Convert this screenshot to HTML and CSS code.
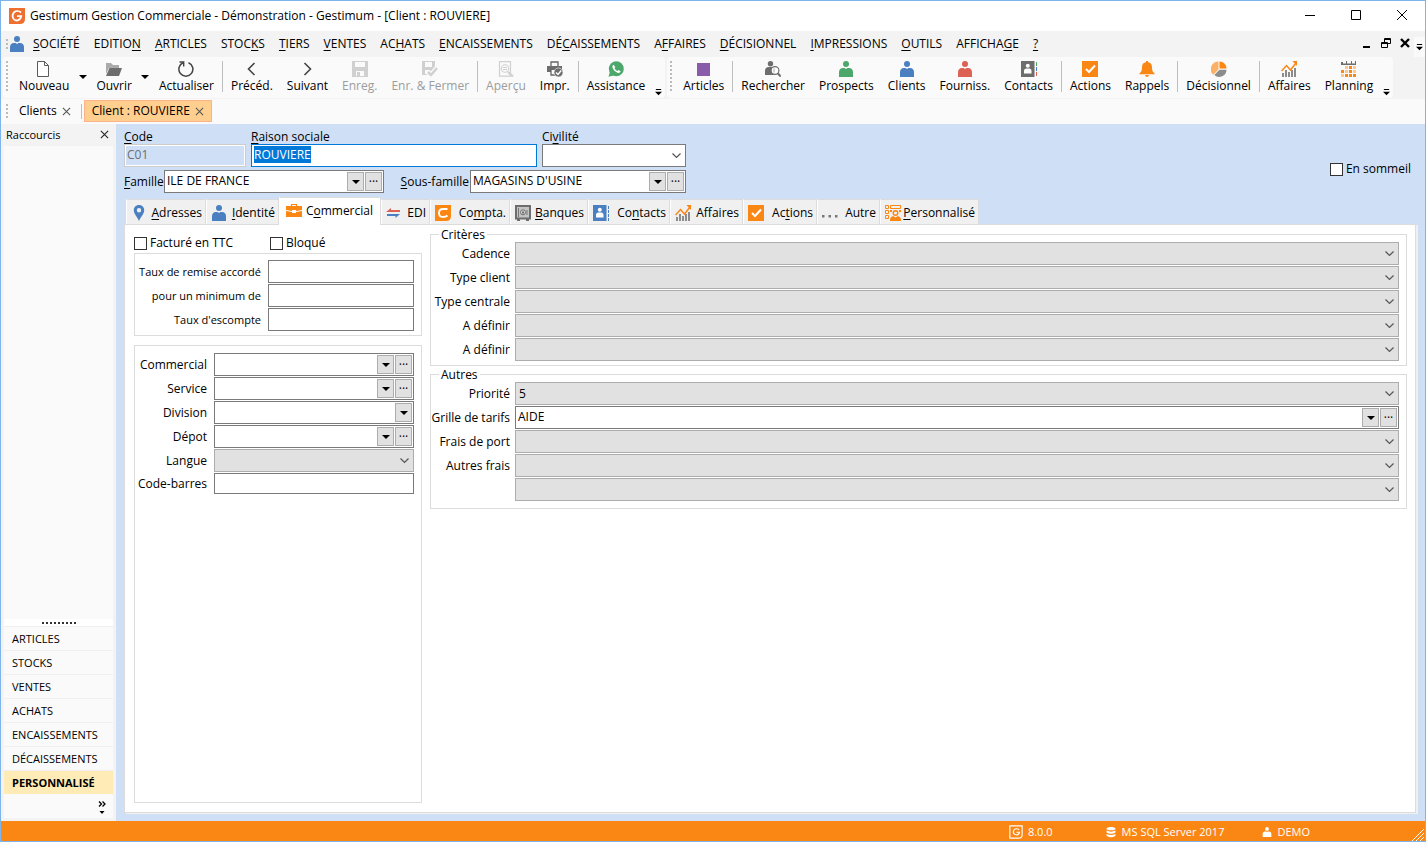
FILE: index.html
```
<!DOCTYPE html>
<html lang="fr">
<head>
    <meta charset="UTF-8">
    <meta name="viewport" content="width=device-width, initial-scale=1.0">
    <title>Gestimum Gestion Commerciale</title>
    <link rel="stylesheet" href="styles.css">
</head>
<body>
    <!-- Icons -->
    <svg class="sprite" aria-hidden="true">
        <symbol id="logo" viewBox="0 0 16 16"><path fill="#ee7030" d="M0 0h16v11q0 5-5 5H0z"/><path fill="none" stroke="#fff" stroke-width="1.8" d="M12 4.500C10 2.600 7 2.600 5 4.300 3 6.500 3.200 9.800 5 11.400c2.400 2 6.500 1.200 7.200-3.200H8"/></symbol>
        <symbol id="person" viewBox="0 0 16 16"><circle cx="8" cy="3" r="3" fill="currentColor"/><path fill="currentColor" d="M1 16v-4.500Q1 7 5 7h1.500L8 8l1.500-1H11q4 0 4 4.500V16z"/></symbol>
        <symbol id="file" viewBox="0 0 16 16"><path fill="#fff" stroke="#5a5a5a" d="M1.500.5h7l4 4v11h-11z"/><path fill="none" stroke="#5a5a5a" d="M8.500.5v4h4"/></symbol>
        <symbol id="folder" viewBox="0 0 16 16"><path fill="#aaa" d="M0 2h5l2 2h6v3H3L0 13z"/><path fill="#6d6d6d" d="M3.500 7H16l-3 8H0z"/></symbol>
        <symbol id="refresh" viewBox="0 0 16 16"><path fill="none" stroke="#444" stroke-width="1.500" d="M10.500 1.700a7 7 0 1 1-5.500.1"/><path fill="none" stroke="#444" stroke-width="1.400" d="M1.500 1h4.200v4.500"/></symbol>
        <symbol id="prev" viewBox="0 0 16 16"><path fill="none" stroke="#444" stroke-width="1.600" d="M10.500 2 4.500 8l6 6"/></symbol>
        <symbol id="next" viewBox="0 0 16 16"><path fill="none" stroke="#444" stroke-width="1.600" d="m5.500 2 6 6-6 6"/></symbol>
        <symbol id="save" viewBox="0 0 16 16"><path fill="#d0d0d0" d="M0 0h16v16H0z"/><path fill="#fafafa" d="M3 1h10v5H3zM4 10h8v5H4z"/><path fill="#d0d0d0" d="M5 11h3v4H5z"/></symbol>
        <symbol id="savecheck" viewBox="0 0 16 16"><path fill="#d0d0d0" d="M0 0h13v14H0z"/><path fill="#fafafa" d="M3 1h7v5H3zM3 9h5v4H3z"/><path fill="none" stroke="#fafafa" stroke-width="5" d="m6 11 3 3 6-7"/><path fill="none" stroke="#d0d0d0" stroke-width="2.500" d="m6 11 3 3 6-7"/></symbol>
        <symbol id="preview" viewBox="0 0 16 16"><path fill="none" stroke="#d0d0d0" stroke-width="1.200" d="M1.500.7h11v14.500h-11z"/><circle cx="7" cy="7.500" r="3.700" fill="#fafafa" stroke="#d0d0d0" stroke-width="1.100"/><path stroke="#d0d0d0" stroke-width="2.200" d="m10 11 5 4.500"/><path stroke="#d0d0d0" d="M5 6.500h4M5 8.500h4"/></symbol>
        <symbol id="printer" viewBox="0 0 16 16"><path fill="none" stroke="#666" stroke-width="1.300" d="M4 5V1h7v4"/><path fill="#6d6d6d" d="M0 5h15v6h-3V9H4v2H0z"/><path fill="none" stroke="#666" stroke-width="1.300" d="M4 9v5h4"/><circle cx="11.500" cy="11.500" r="4.500" fill="#6d6d6d" stroke="#fafafa" stroke-width=".6"/><path fill="none" stroke="#fff" stroke-width="1.400" d="m9 11.500 2 2 3.200-4"/></symbol>
        <symbol id="phone" viewBox="0 0 16 16"><circle cx="8.300" cy="7.700" r="7.500" fill="#4ca76b"/><path fill="#4ca76b" d="m.5 15.800 1.500-5 3.500 3.700z"/><path fill="#fff" d="M5.500 3.700c-1 .6-1.400 1.700-.9 3 1 2.600 2.800 4.300 5.300 5.200 1.300.4 2.400-.3 2.700-1.600l-2-1.300-1.100 1c-1.500-.6-2.400-1.500-3-2.900l.8-1z"/></symbol>
        <symbol id="square" viewBox="0 0 16 16"><path fill="#8a5aab" d="M1 2h13v13H1z"/></symbol>
        <symbol id="search" viewBox="0 0 16 16"><circle cx="5.500" cy="2.700" r="2.700" fill="#6d6d6d"/><path fill="#6d6d6d" d="M0 14v-4q0-4 4-4h5v8z"/><circle cx="10" cy="9.500" r="3.900" fill="#fff" stroke="#6d6d6d" stroke-width="1.200"/><path stroke="#6d6d6d" stroke-width="2" d="m12.700 12.300 3 3.200"/><path stroke="#aaa" d="M9 7.500v4"/></symbol>
        <symbol id="book" viewBox="0 0 16 16"><path fill="currentColor" d="M0 0h13.500v16H0z"/><circle cx="6.800" cy="4.800" r="2" fill="#fff"/><path fill="#fff" d="M3 12.500V10q0-2.500 2.500-2.500H8q2.500 0 2.500 2.500v2.500z"/></symbol>
        <symbol id="bookcolor" viewBox="0 0 16 16"><use href="#book"/><path fill="#4ca76b" d="M15 1h1v4h-1z"/><path fill="#4a7fc1" d="M15 6h1v4h-1z"/><path fill="#dc6254" d="M15 11h1v4h-1z"/></symbol>
        <symbol id="bookblue" viewBox="0 0 16 16"><use href="#book"/><path fill="none" stroke="#4a7fc1" stroke-dasharray="3 1" d="M15.500 1v15"/></symbol>
        <symbol id="check" viewBox="0 0 16 16"><path fill="#fa8714" d="M0 0h16v16H0z"/><path fill="none" stroke="#fff" stroke-width="2" d="m4 8 3 3 6-6.500"/></symbol>
        <symbol id="bell" viewBox="0 0 16 16"><path fill="#fa8714" d="M7 0h2v1.300q4 .7 4 5c0 3 .6 5 2.500 6v1H.5v-1c1.900-1 2.500-3 2.500-6q0-4.300 4-5zM6 14h4q-.5 2-2 2t-2-2z"/></symbol>
        <symbol id="pie" viewBox="0 0 16 16"><path fill="#fbb065" d="M7.500 8.500V.5a7.700 7.700 0 0 0-5.300 13.300z"/><path fill="#fa8714" d="M8.500 7.500V.5a7 7 0 0 1 7 7z"/><path fill="#8c8c8c" d="M8.500 8.700h7A7.300 7.300 0 0 1 3.300 14z"/></symbol>
        <symbol id="chart" viewBox="0 0 16 16"><path fill="#8c8c8c" d="M1 12h2v4H1zM4 9h2v7H4zM7 11h2v5H7zM10 9h2v7h-2zM13 7h2v9h-2z"/><path fill="none" stroke="#fa8714" stroke-width="1.500" d="m.5 10 5-5.500 4 4.500 5.500-7"/><path fill="#fa8714" d="M11.500 0H16v5z"/></symbol>
        <symbol id="calendar" viewBox="0 0 16 16"><path fill="#6d6d6d" d="M0 1h2v1.500h3V0h1v2.500h4V0h1v2.500h3V0h1v4H0z"/><path fill="#fbc894" d="M4 5h3v3H4zM12 5h3v3h-3zM4 9h3v3H4zM12 9h3v3h-3zM0 13h3v3H0z"/><path fill="#fa8714" d="M8 5h3v3H8zM0 9h3v3H0zM8 9h3v3H8zM4 13h3v3H4zM8 13h3v3H8zM12 13h3v3h-3z"/></symbol>
        <symbol id="pin" viewBox="0 0 16 16"><path fill="#4a7fc1" fill-rule="evenodd" d="M8 0c3 0 5.200 2.200 5.200 5.200C13.200 9 10 11 8 16 6 11 2.800 9 2.800 5.200 2.800 2.200 5 0 8 0m0 3a2.200 2.200 0 1 0 0 4.400A2.200 2.200 0 0 0 8 3"/></symbol>
        <symbol id="case" viewBox="0 0 16 16"><path fill="none" stroke="#fa8714" stroke-width="1.200" d="M5.500 3.500v-2h5v2"/><path fill="#fa8714" d="M0 3h16v4l-6 1V7H6v1L0 7zM0 8l6 1v1h4V9l6-1v6H0z"/></symbol>
        <symbol id="arrows" viewBox="0 0 16 16"><path fill="#dc6254" d="m0 7 5-4v2h9v2z"/><path fill="#4a7fc1" d="M1 9h13l-4.500 4v-2H1z"/></symbol>
        <symbol id="compta" viewBox="0 0 16 16"><path fill="#fa8714" d="M0 0h16v11q0 5-5 5H0z"/><path fill="none" stroke="#fff" stroke-width="1.800" d="M12.500 4H8Q4 4 4 8t4 4q3 0 4.500-1.500"/></symbol>
        <symbol id="safe" viewBox="0 0 16 16"><path fill="#c4c4c4" stroke="#6d6d6d" stroke-width="2" d="M1 1h14v12.500H1z"/><path fill="none" stroke="#777" d="M3.500 3v9M12 5v5"/><circle cx="8" cy="7.300" r="2.500" fill="#ddd" stroke="#6d6d6d"/><path fill="#6d6d6d" d="M2 14h3v2H2zM11 14h3v2h-3zM7 6.500h2v2H7z"/></symbol>
        <symbol id="dots" viewBox="0 0 16 16"><path fill="#777" d="M0 10h2.500v2.500H0zM6.500 10H9v2.500H6.500zM13 10h2.500v2.500H13z"/></symbol>
        <symbol id="custom" viewBox="0 0 16 16"><path fill="none" stroke="#fa8714" d="M.5.500h3v3h-3zM.5 5.500h3v3h-3zM.5 10.500h3v3h-3zM5.500.500h10v3h-10z"/><path fill="#fa8714" d="M5 5h2v2H5zM14 5h2v2h-2zM5 16v-1q0-3 3-4l2.500 1.500L13 11q3 1 3 4v1z"/><circle cx="10.500" cy="8" r="2.300" fill="none" stroke="#fa8714" stroke-width="1.400"/></symbol>
        <symbol id="logoline" viewBox="0 0 16 16"><path fill="none" stroke="#fff" stroke-width="1.300" d="M1 1h14v10q0 4-4 4H1z"/><path fill="none" stroke="#fff" stroke-width="1.300" d="M11.500 5.500c-2-2-6-1.700-6.500 2-.4 4 6 5.500 7 .8H8.500"/></symbol>
        <symbol id="database" viewBox="0 0 16 16"><path fill="#fff" d="M2 3.500c0-3 12-3 12 0s-12 3-12 0M2 6q6 3 12 0v2.500q-6 3.500-12 0zM2 10.500q6 3 12 0V13q-6 4-12 0z"/></symbol>
        <symbol id="caret" viewBox="0 0 8 4"><path fill="currentColor" d="M0 0h8L4 4z"/></symbol>
        <symbol id="more" viewBox="0 0 8 8"><path fill="#000" d="M1 0h6v1H1zM0 3h8L4 7z"/></symbol>
        <symbol id="cross" viewBox="0 0 10 10"><path fill="none" stroke="currentColor" stroke-width="1.200" d="m1 1 8 8m0-8-8 8"/></symbol>
    </svg>

    <div class="window">
        <header class="title-bar">
            <svg class="icon"><use href="#logo"/></svg>
            <h1>Gestimum Gestion Commerciale - Démonstration - Gestimum - [Client : ROUVIERE]</h1>
            <div class="window-buttons">
                <button aria-label="Réduire"><svg viewBox="0 0 10 10"><path d="M0 5.500h10"/></svg></button>
                <button aria-label="Agrandir"><svg viewBox="0 0 10 10"><path d="M.5.500h9v9h-9z"/></svg></button>
                <button aria-label="Fermer"><svg viewBox="0 0 10 10"><path d="m0 0 10 10M10 0 0 10"/></svg></button>
            </div>
        </header>

        <nav class="menu-bar">
            <span class="grip"></span>
            <svg class="icon blue"><use href="#person"/></svg>
            <div class="menu">
                <a href="#"><u>S</u>OCIÉTÉ</a>
                <a href="#">EDITIO<u>N</u></a>
                <a href="#"><u>A</u>RTICLES</a>
                <a href="#">STOC<u>K</u>S</a>
                <a href="#"><u>T</u>IERS</a>
                <a href="#"><u>V</u>ENTES</a>
                <a href="#">AC<u>H</u>ATS</a>
                <a href="#"><u>E</u>NCAISSEMENTS</a>
                <a href="#">DÉ<u>C</u>AISSEMENTS</a>
                <a href="#">A<u>F</u>FAIRES</a>
                <a href="#"><u>D</u>ÉCISIONNEL</a>
                <a href="#"><u>I</u>MPRESSIONS</a>
                <a href="#"><u>O</u>UTILS</a>
                <a href="#">AFFICHA<u>G</u>E</a>
                <a href="#"><u>?</u></a>
            </div>
            <div class="child-buttons">
                <button aria-label="Réduire la fiche"><svg viewBox="0 0 10 10"><path stroke-width="2" d="M1 9h7"/></svg></button>
                <button aria-label="Restaurer la fiche"><svg viewBox="0 0 10 10"><path d="M.5 4.500h6v5h-6zM.5 5.500h6M3.500 4V.5h6v5H7M3 1.500h6"/></svg></button>
                <button aria-label="Fermer la fiche"><svg viewBox="0 0 10 10"><path stroke-width="2.400" d="m1 1 8 8m0-8-8 8"/></svg></button>
            </div>
            <button class="overflow" aria-label="Options du menu"><svg><use href="#more"/></svg></button>
        </nav>

        <div class="toolbars">
            <div class="toolbar">
                <span class="grip"></span>
                <button class="tool"><svg class="icon"><use href="#file"/></svg>Nouveau</button>
                <button class="drop" aria-label="Types de nouveau"><svg><use href="#caret"/></svg></button>
                <button class="tool"><svg class="icon"><use href="#folder"/></svg>Ouvrir</button>
                <button class="drop" aria-label="Fiches récentes"><svg><use href="#caret"/></svg></button>
                <button class="tool"><svg class="icon"><use href="#refresh"/></svg>Actualiser</button>
                <span class="separator"></span>
                <button class="tool"><svg class="icon"><use href="#prev"/></svg>Précéd.</button>
                <button class="tool"><svg class="icon"><use href="#next"/></svg>Suivant</button>
                <button class="tool" disabled><svg class="icon"><use href="#save"/></svg>Enreg.</button>
                <button class="tool" disabled><svg class="icon"><use href="#savecheck"/></svg>Enr. &amp; Fermer</button>
                <span class="separator"></span>
                <button class="tool" disabled><svg class="icon"><use href="#preview"/></svg>Aperçu</button>
                <button class="tool"><svg class="icon"><use href="#printer"/></svg>Impr.</button>
                <span class="separator"></span>
                <button class="tool"><svg class="icon"><use href="#phone"/></svg>Assistance</button>
                <button class="overflow" aria-label="Autres commandes"><svg><use href="#more"/></svg></button>
            </div>
            <div class="toolbar">
                <span class="grip"></span>
                <button class="tool"><svg class="icon"><use href="#square"/></svg>Articles</button>
                <span class="separator"></span>
                <button class="tool"><svg class="icon"><use href="#search"/></svg>Rechercher</button>
                <button class="tool"><svg class="icon green"><use href="#person"/></svg>Prospects</button>
                <button class="tool"><svg class="icon blue"><use href="#person"/></svg>Clients</button>
                <button class="tool"><svg class="icon red"><use href="#person"/></svg>Fourniss.</button>
                <button class="tool"><svg class="icon grey"><use href="#bookcolor"/></svg>Contacts</button>
                <span class="separator"></span>
                <button class="tool"><svg class="icon"><use href="#check"/></svg>Actions</button>
                <button class="tool"><svg class="icon"><use href="#bell"/></svg>Rappels</button>
                <span class="separator"></span>
                <button class="tool"><svg class="icon"><use href="#pie"/></svg>Décisionnel</button>
                <span class="separator"></span>
                <button class="tool"><svg class="icon"><use href="#chart"/></svg>Affaires</button>
                <button class="tool"><svg class="icon"><use href="#calendar"/></svg>Planning</button>
                <button class="overflow" aria-label="Autres raccourcis"><svg><use href="#more"/></svg></button>
            </div>
        </div>

        <div class="documents">
            <span class="grip"></span>
            <button class="document">Clients <svg><use href="#cross"/></svg></button>
            <span class="separator"></span>
            <button class="document current">Client : ROUVIERE <svg><use href="#cross"/></svg></button>
        </div>

        <div class="workspace">
            <aside class="sidebar">
                <div class="sidebar-title">
                    <h2>Raccourcis</h2>
                    <button aria-label="Fermer les raccourcis"><svg><use href="#cross"/></svg></button>
                </div>
                <div class="sidebar-space"></div>
                <div class="splitter"><span></span></div>
                <nav class="shortcuts">
                    <a href="#">ARTICLES</a>
                    <a href="#">STOCKS</a>
                    <a href="#">VENTES</a>
                    <a href="#">ACHATS</a>
                    <a href="#">ENCAISSEMENTS</a>
                    <a href="#">DÉCAISSEMENTS</a>
                    <a href="#" class="selected">PERSONNALISÉ</a>
                </nav>
                <div class="sidebar-footer">
                    <button aria-label="Configurer les boutons"><svg viewBox="0 0 8 14"><path fill="none" stroke="#000" stroke-width="1.300" d="m1 .5 2.500 2.500L1 5.500M4.500.5 7 3 4.500 5.500"/><path d="M1.500 10h5L4 13z"/></svg></button>
                </div>
            </aside>

            <main class="record">
                <div class="record-head">
                    <div class="identity">
                        <div class="identity-line">
                            <div class="field code">
                                <label for="code"><u>C</u>ode</label>
                                <input type="text" id="code" value="C01" disabled>
                            </div>
                            <div class="field name">
                                <label for="raison"><u>R</u>aison sociale</label>
                                <input type="text" id="raison" value="ROUVIERE">
                            </div>
                            <div class="field title">
                                <label for="civilite">Ci<u>v</u>ilité</label>
                                <select id="civilite"><option></option></select>
                            </div>
                        </div>
                        <div class="identity-line family">
                            <label for="famille"><u>F</u>amille</label>
                            <div class="lookup">
                                <input type="text" id="famille" value="ILE DE FRANCE">
                                <button aria-label="Liste"><svg><use href="#caret"/></svg></button>
                                <button aria-label="Parcourir">···</button>
                            </div>
                            <label for="sous-famille"><u>S</u>ous-famille</label>
                            <div class="lookup">
                                <input type="text" id="sous-famille" value="MAGASINS D'USINE">
                                <button aria-label="Liste"><svg><use href="#caret"/></svg></button>
                                <button aria-label="Parcourir">···</button>
                            </div>
                        </div>
                    </div>
                    <label class="check"><input type="checkbox"> En sommeil</label>
                </div>

                <div class="tabs" role="tablist">
                    <button role="tab"><svg class="icon"><use href="#pin"/></svg><span><u>A</u>dresses</span></button>
                    <button role="tab"><svg class="icon blue"><use href="#person"/></svg><span><u>I</u>dentité</span></button>
                    <button role="tab" class="active" aria-selected="true"><svg class="icon"><use href="#case"/></svg><span>C<u>o</u>mmercial</span></button>
                    <button role="tab"><svg class="icon"><use href="#arrows"/></svg><span>EDI</span></button>
                    <button role="tab"><svg class="icon"><use href="#compta"/></svg><span>Co<u>m</u>pta.</span></button>
                    <button role="tab"><svg class="icon"><use href="#safe"/></svg><span><u>B</u>anques</span></button>
                    <button role="tab"><svg class="icon blue"><use href="#bookblue"/></svg><span>Co<u>n</u>tacts</span></button>
                    <button role="tab"><svg class="icon"><use href="#chart"/></svg><span>Affaires</span></button>
                    <button role="tab"><svg class="icon"><use href="#check"/></svg><span>Ac<u>t</u>ions</span></button>
                    <button role="tab"><svg class="icon"><use href="#dots"/></svg><span>Autre</span></button>
                    <button role="tab"><svg class="icon"><use href="#custom"/></svg><span><u>P</u>ersonnalisé</span></button>
                </div>

                <div class="panel" role="tabpanel">
                    <div class="left-column">
                        <div class="checks">
                            <label class="check"><input type="checkbox"> Facturé en TTC</label>
                            <label class="check"><input type="checkbox"> Bloqué</label>
                        </div>
                        <div class="box rates">
                            <label for="remise">Taux de remise accordé</label>
                            <input type="text" id="remise">
                            <label for="minimum">pour un minimum de</label>
                            <input type="text" id="minimum">
                            <label for="escompte">Taux d'escompte</label>
                            <input type="text" id="escompte">
                        </div>
                        <div class="box details">
                            <label for="commercial">Commercial</label>
                            <div class="lookup">
                                <input type="text" id="commercial">
                                <button aria-label="Liste"><svg><use href="#caret"/></svg></button>
                                <button aria-label="Parcourir">···</button>
                            </div>
                            <label for="service">Service</label>
                            <div class="lookup">
                                <input type="text" id="service">
                                <button aria-label="Liste"><svg><use href="#caret"/></svg></button>
                                <button aria-label="Parcourir">···</button>
                            </div>
                            <label for="division">Division</label>
                            <div class="lookup">
                                <input type="text" id="division">
                                <button aria-label="Liste"><svg><use href="#caret"/></svg></button>
                            </div>
                            <label for="depot">Dépot</label>
                            <div class="lookup">
                                <input type="text" id="depot">
                                <button aria-label="Liste"><svg><use href="#caret"/></svg></button>
                                <button aria-label="Parcourir">···</button>
                            </div>
                            <label for="langue">Langue</label>
                            <select id="langue" class="flat"><option></option></select>
                            <label for="barres">Code-barres</label>
                            <input type="text" id="barres" class="short">
                        </div>
                    </div>

                    <div class="right-column">
                        <fieldset>
                            <legend>Critères</legend>
                            <label for="cadence">Cadence</label>
                            <select id="cadence" class="flat"><option></option></select>
                            <label for="type-client">Type client</label>
                            <select id="type-client" class="flat"><option></option></select>
                            <label for="type-centrale">Type centrale</label>
                            <select id="type-centrale" class="flat"><option></option></select>
                            <label for="critere4">A définir</label>
                            <select id="critere4" class="flat"><option></option></select>
                            <label for="critere5">A définir</label>
                            <select id="critere5" class="flat"><option></option></select>
                        </fieldset>
                        <fieldset>
                            <legend>Autres</legend>
                            <label for="priorite">Priorité</label>
                            <select id="priorite" class="flat"><option>5</option></select>
                            <label for="grille">Grille de tarifs</label>
                            <div class="lookup">
                                <input type="text" id="grille" value="AIDE">
                                <button aria-label="Liste"><svg><use href="#caret"/></svg></button>
                                <button aria-label="Parcourir">···</button>
                            </div>
                            <label for="port">Frais de port</label>
                            <select id="port" class="flat"><option></option></select>
                            <label for="frais">Autres frais</label>
                            <select id="frais" class="flat"><option></option></select>
                            <label for="frais2"></label>
                            <select id="frais2" class="flat" aria-label="Autres frais, suite"><option></option></select>
                        </fieldset>
                    </div>
                </div>
            </main>
        </div>

        <footer class="status-bar">
            <span class="version"><svg><use href="#logoline"/></svg>8.0.0</span>
            <span class="server"><svg><use href="#database"/></svg>MS SQL Server 2017</span>
            <span class="user"><svg><use href="#person"/></svg>DEMO</span>
            <svg class="resize" viewBox="0 0 12 12"><path d="M0 12 12 0M4 12l8-8M8 12l4-4"/></svg>
        </footer>
    </div>

    <script>
        // the name is ready to be typed over when the record opens
        document.getElementById('raison').select();
    </script>
</body>
</html>
```
FILE: styles.css
```
* {
    box-sizing: border-box;
}
body {
    margin: 0;
    font-family: "Open Sans", "Noto Sans", sans-serif;
    font-size: 12px;
    line-height: 16px;
    color: #000;
}
button, input, select {
    font: inherit;
    color: inherit;
    margin: 0;
}
button {
    background: none;
    border: none;
    padding: 0;
    white-space: nowrap;
}
a {
    color: inherit;
    text-decoration: none;
}
u {
    text-underline-offset: 2px;
    text-decoration-skip-ink: none;
}
h1, h2 {
    margin: 0;
    font-size: 12px;
    font-weight: normal;
}
.sprite {
    display: none;
}
.icon {
    width: 16px;
    height: 16px;
    flex: none;
    overflow: visible;
}
.blue { color: #4a7fc1; }
.green { color: #4ca76b; }
.red { color: #dc6254; }
.grey { color: #6d6d6d; }

.window {
    height: 100vh;
    display: flex;
    flex-direction: column;
    border: 1px solid #7eb4ea;
    background-color: #f3f3f3;
    overflow: hidden;
}
.grip {
    width: 2px;
    flex: none;
    background: repeating-linear-gradient(#bbb 0 2px, transparent 2px 4px);
}
.separator {
    width: 1px;
    flex: none;
    background-color: #bebebe;
}

/* Title and menu */
.title-bar {
    display: flex;
    align-items: center;
    height: 30px;
    padding-left: 8px;
    gap: 5px;
    background-color: #fff;
    flex: none;
}
.window-buttons {
    display: flex;
    margin-left: auto;
}
.window-buttons button {
    width: 46px;
    height: 28px;
}
.window-buttons svg, .child-buttons svg {
    width: 10px;
    height: 10px;
    fill: none;
    stroke: #000;
    overflow: visible;
}
.menu-bar {
    display: flex;
    align-items: center;
    height: 26px;
    padding-left: 5px;
    flex: none;
}
.menu-bar .grip {
    height: 10px;
    margin-right: 1px;
}
.menu {
    display: flex;
    gap: 14px;
    margin-left: 8px;
}
.child-buttons {
    display: flex;
    margin-left: auto;
}
.child-buttons button {
    width: 19px;
}
.overflow {
    align-self: flex-end;
    width: 13px;
    height: 14px;
}
.overflow svg {
    width: 7px;
    height: 7px;
}
.menu-bar .overflow {
    width: 11px;
    height: 20px;
    background-color: #fafafa;
}

/* Toolbars */
.toolbars {
    display: flex;
    gap: 2px;
    height: 42px;
    padding: 0 0 1px 2px;
    flex: none;
}
.toolbar {
    display: flex;
    padding-left: 3px;
    background-color: #fafafa;
    border-radius: 4px;
}
.toolbar .grip, .toolbar .separator {
    height: 31px;
    margin-top: 4px;
}
.toolbar .grip {
    margin-right: 4px;
}
.toolbar .separator {
    margin-left: 1px;
    margin-right: 1px;
}
.tool {
    display: flex;
    flex-direction: column;
    align-items: center;
    gap: 1px;
    padding: 4px 7px 0;
}
.tool:disabled {
    color: #9c9c9c;
}
.drop {
    width: 13px;
    padding-bottom: 6px;
}
.drop svg, .lookup svg {
    width: 8px;
    height: 4px;
}

/* Open documents */
.documents {
    display: flex;
    align-items: center;
    height: 25px;
    padding: 0 0 1px 5px;
    background-color: #fafafa;
    flex: none;
}
.documents .grip {
    height: 14px;
}
.documents .separator {
    height: 15px;
    margin-right: 2px;
}
.document {
    display: flex;
    align-items: center;
    gap: 5px;
    height: 22px;
    padding: 0 10px 0 11px;
}
.document svg, .sidebar-title svg {
    width: 9px;
    height: 9px;
    color: #555;
}
.document.current {
    padding: 0 7px;
    background-color: #ffcf8f;
    border: 1px solid #ffb18a;
}

/* Sidebar */
.workspace {
    display: flex;
    flex: 1;
    min-height: 0;
}
.sidebar {
    display: flex;
    flex-direction: column;
    width: 115px;
    padding: 0 3px;
    flex: none;
}
.sidebar-title {
    display: flex;
    justify-content: space-between;
    align-items: center;
    height: 22px;
    padding: 0 4px 0 2px;
}
.sidebar-title h2 {
    font-size: 11px;
}
.sidebar-title svg {
    color: #222;
}
.sidebar-space {
    flex: 1;
    background-color: #fafafa;
}
.splitter {
    display: flex;
    justify-content: center;
    align-items: center;
    height: 7px;
    background-color: #fff;
}
.splitter span {
    width: 34px;
    height: 2px;
    background: repeating-linear-gradient(90deg, #333 0 2px, transparent 2px 4px);
}
.shortcuts a {
    display: flex;
    align-items: center;
    height: 24px;
    padding-left: 8px;
    font-size: 11px;
    background-color: #fafafa;
    border-top: 1px solid #efefef;
}
.shortcuts .selected {
    background-color: #ffebb5;
    font-weight: bold;
}
.sidebar-footer {
    display: flex;
    justify-content: flex-end;
    height: 24px;
    margin-bottom: 3px;
    padding: 4px 7px 0 0;
    background-color: #fafafa;
}
.sidebar-footer svg {
    display: block;
    width: 8px;
    height: 14px;
}

/* Fields */
input[type="text"], select, .lookup {
    height: 23px;
    width: 100%;
    min-width: 0;
    padding: 0 2px;
    background-color: #fff;
    border: 1px solid #7a7a7a;
    border-radius: 0;
    outline: none;
}
input[type="text"] {
    padding-bottom: 2px;
}
input::selection {
    background-color: #0078d7;
    color: #fff;
}
input[type="text"]:focus {
    border-color: #0078d7;
}
input[type="text"]:disabled {
    background-color: #cfdff5;
    border: 1px solid #ccc;
    box-shadow: inset 0 0 0 1px #fff;
    color: #6d6d6d;
}
select {
    appearance: none;
    padding-left: 3px;
    background: #fff url("data:image/svg+xml,%3Csvg xmlns='http://www.w3.org/2000/svg' width='9' height='6'%3E%3Cpath d='M.5.5l4 4 4-4' fill='none' stroke='%23555' stroke-width='1.200'/%3E%3C/svg%3E") no-repeat right 4px center;
}
select.flat {
    background-color: #e1e1e1;
    border-color: #adadad;
}
.lookup {
    display: flex;
    align-items: center;
    gap: 1px;
    padding: 0 1px 0 0;
}
.lookup input[type="text"] {
    flex: 1;
    height: 21px;
    border: none;
}
.lookup button {
    display: flex;
    justify-content: center;
    align-items: center;
    width: 17px;
    height: 19px;
    flex: none;
    background-color: #e1e1e1;
    border: 1px solid #adadad;
}
.check {
    display: flex;
    align-items: center;
    gap: 3px;
}
.check input {
    appearance: none;
    width: 13px;
    height: 13px;
    background-color: #fff;
    border: 1px solid #333;
}

/* Record */
.record {
    display: flex;
    flex-direction: column;
    flex: 1;
    min-width: 0;
    padding: 0 8px 8px;
    background-color: #cfdff5;
}
.record-head {
    display: flex;
    justify-content: space-between;
    align-items: flex-end;
    padding-right: 6px;
}
.record-head > .check {
    padding-bottom: 16px;
}
.identity {
    width: 562px;
}
.identity-line {
    display: flex;
    gap: 5px;
}
.field label {
    display: block;
    height: 20px;
    padding-top: 5px;
}
.code { width: 122px; }
.name { flex: 1; }
.title { width: 144px; }
.family {
    display: grid;
    grid-template-columns: 40px 220px 86px 216px;
    gap: 0;
    align-items: center;
    margin-top: 3px;
}
.family label:nth-of-type(2) {
    text-align: right;
    padding-right: 1px;
}
.tabs {
    display: grid;
    grid-template-columns: 80px 73px 102px 49px 80px 78px 82px 73px 74px 63px 99px;
    align-items: end;
    height: 31px;
    padding-left: 2px;
}
.tabs button {
    display: flex;
    align-items: center;
    justify-content: space-between;
    height: 25px;
    padding: 1px 3px 0 4px;
    background-color: #f0f0f0;
    border: 1px solid #dcdcdc;
    border-left-color: #fff;
    border-bottom: none;
}
.tabs .active {
    height: 28px;
    margin-bottom: -1px;
    padding: 0 7px 2px 6px;
    background-color: #fff;
    z-index: 1;
}
.panel {
    display: flex;
    gap: 8px;
    flex: 1;
    min-height: 0;
    padding: 2px 8px 9px 9px;
    background-color: #fff;
    border: 1px solid #dcdcdc;
    box-shadow: 2px 1px 0 #f0f0f0;
    margin-right: 1px;
}
.left-column {
    display: flex;
    flex-direction: column;
    width: 288px;
    padding-top: 8px;
    flex: none;
}
.checks {
    display: grid;
    grid-template-columns: 136px 1fr;
    height: 18px;
    align-items: start;
}
.box {
    display: grid;
    align-items: center;
    align-content: start;
    gap: 1px 7px;
    padding: 7px;
    border: 1px solid #dcdcdc;
}
.box label, fieldset label {
    justify-self: end;
    white-space: nowrap;
}
.rates {
    grid-template-columns: 1fr 146px;
    padding: 6px 7px 4px 0;
    margin-bottom: 9px;
}
.rates label {
    font-size: 11px;
}
.details {
    grid-template-columns: 1fr 200px;
    padding-left: 0;
    flex: 1;
}
.details .short {
    height: 21px;
}
.right-column {
    flex: 1;
    min-width: 0;
}
fieldset {
    display: grid;
    grid-template-columns: 79px 1fr;
    gap: 1px 5px;
    align-items: center;
    min-width: 0;
    margin: 0;
    padding: 0 7px 4px 0;
    border: 1px solid #dcdcdc;
}
legend {
    height: 15px;
    margin-left: 8px;
    padding: 0 2px;
    line-height: 15px;
}
fieldset + fieldset {
    margin-top: 1px;
    padding-bottom: 7px;
}

/* Status bar */
.status-bar {
    position: relative;
    display: flex;
    align-items: center;
    justify-content: flex-end;
    height: 20px;
    padding: 2px 115px 0 0;
    background-color: #fa8714;
    color: #fff;
    font-size: 11px;
    flex: none;
}
.status-bar span {
    display: flex;
    align-items: center;
    gap: 5px;
}
.status-bar span svg {
    width: 12px;
    height: 12px;
}
.status-bar .version svg {
    width: 14px;
    height: 14px;
}
.status-bar .user svg {
    width: 10px;
    height: 10px;
}
.version {
    margin-right: 52px;
}
.server {
    margin-right: 38px;
}
.resize {
    position: absolute;
    right: 1px;
    bottom: 0;
    width: 12px;
    height: 12px;
    stroke: #fff;
}
```
